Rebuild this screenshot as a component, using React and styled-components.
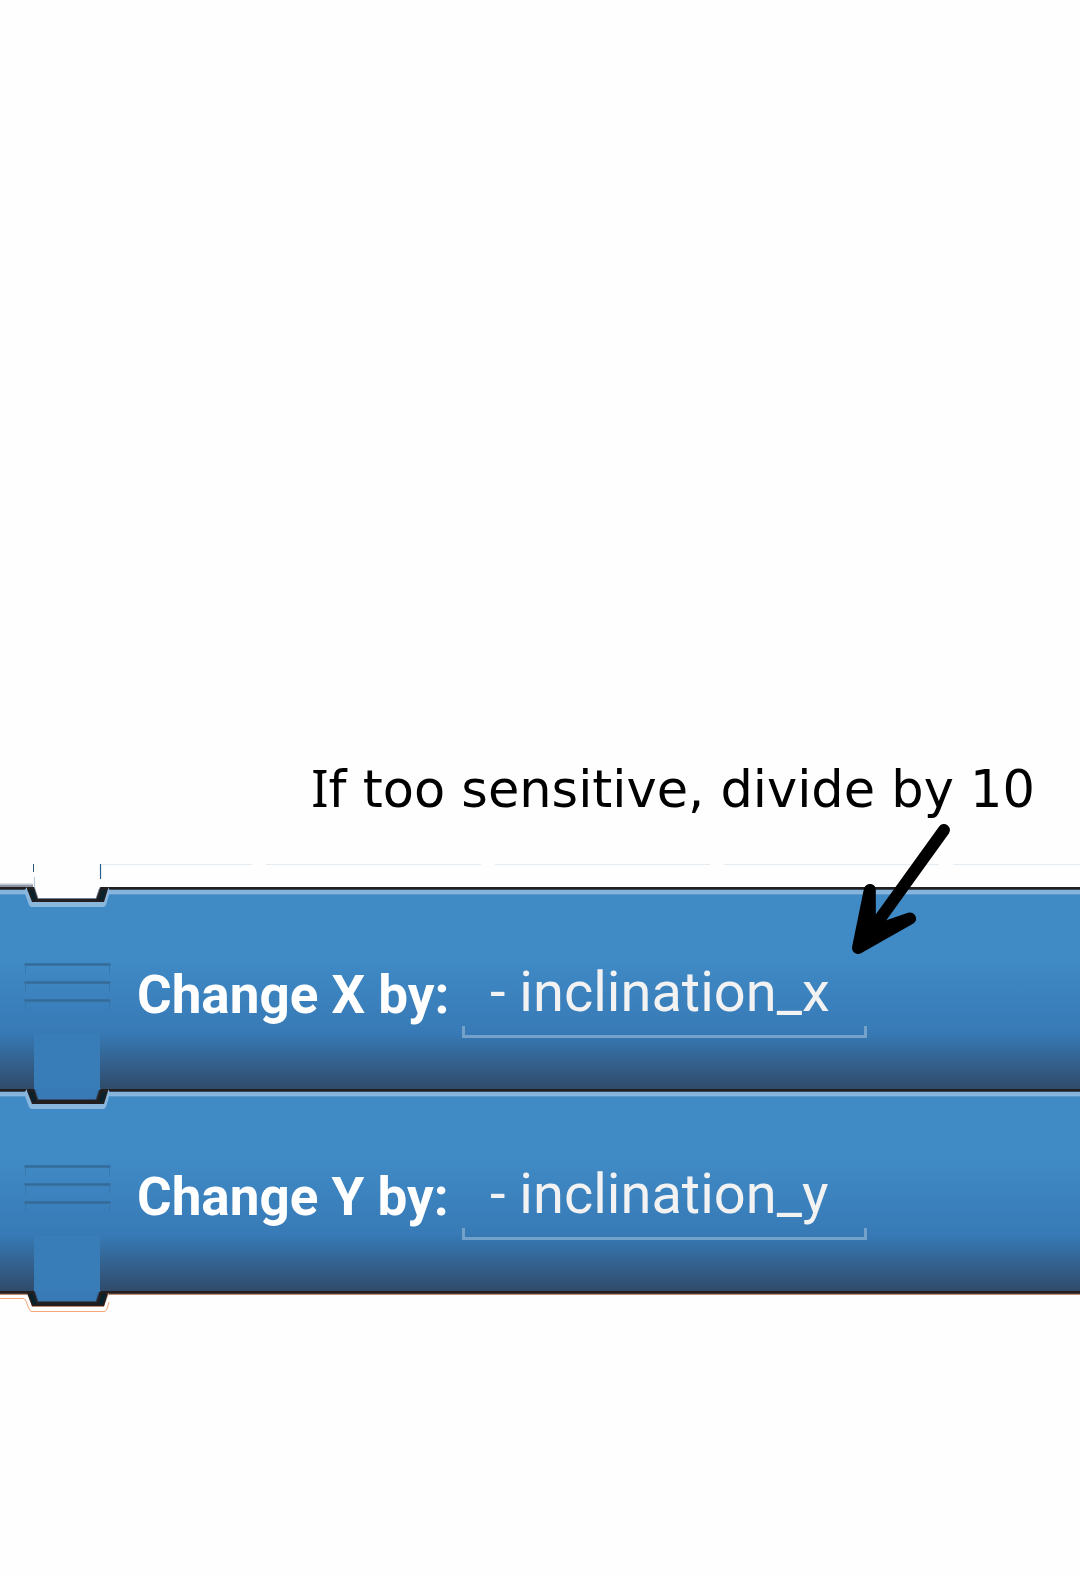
import React from "react";
import styled, { createGlobalStyle } from "styled-components";

const GlobalStyle = createGlobalStyle`
  *, *::before, *::after { box-sizing: border-box; }
  body { margin: 0; background: #fefefe; }
`;

const Page = styled.main`
  min-height: 100vh;
  padding-top: 755px;
  overflow: hidden;
  background: #fefefe;
`;

const Note = styled.p`
  position: relative;
  margin: 0;
  padding-right: 45px;
  text-align: right;
  white-space: nowrap;
  color: #000;
  font: 51px/70px "DejaVu Sans", Verdana, sans-serif;
`;

const SerifCapital = styled.span`
  font-family: "Noto Sans", sans-serif;
  line-height: 0;
`;

const Arrow = styled.svg`
  position: absolute;
  z-index: 3;
  top: 65px;
  right: 120px;
  width: 120px;
  height: 140px;
`;

const Guide = styled.div`
  height: 1px;
  margin: 39px 0 22px 101px;
  background: linear-gradient(90deg, #e4ebf1 215px, transparent 215px) -64px 0 / 229px 1px repeat-x;
`;

const Stack = styled.form`
  display: flex;
  flex-direction: column;
`;

const Block = styled.div`
  position: relative;
  display: flex;
  align-items: flex-start;
  padding: 74px 24px 51px;
  background:
    linear-gradient(#231f20 2px, #37495d 2px 3px, #85b3db 3px 6px, #8ab7dd 6px 7px, #5898cd 7px 8px, transparent 8px),
    linear-gradient(#408bc6 0 33%, #377ab6 72%, #304b6a 100%);
`;

const Grip = styled.svg`
  flex: none;
  width: 87px;
  height: 48px;
`;

const Label = styled.label`
  flex: none;
  width: 351px;
  padding-left: 26px;
  color: #fff;
  font: bold 53px/68px Roboto, sans-serif;
  white-space: nowrap;
`;

const Field = styled.input`
  flex: 0 1 405px;
  min-width: 0;
  height: 77px;
  margin: 0;
  padding: 0 0 15px 28px;
  border: 0;
  border-radius: 0;
  outline: 0;
  color: #f2f2f3;
  font: 56px/62px Roboto, sans-serif;
  background:
    linear-gradient(#73a1ca, #73a1ca) 0 100% / 100% 3px no-repeat,
    linear-gradient(#73a1ca, #73a1ca) 0 100% / 3px 12px no-repeat,
    linear-gradient(#73a1ca, #73a1ca) 100% 100% / 3px 12px no-repeat;
`;

const Joint = styled.svg`
  position: absolute;
  z-index: 1;
  top: -60px;
  left: 0;
  width: 120px;
  height: 90px;
`;

const BottomEdge = styled.div`
  position: relative;
  height: 4px;
  background: linear-gradient(#231f20 2px, #4a3734 2px 3px, #bd8e7c 3px 4px);
`;

function Connector({ kind }) {
  const first = kind === "first";
  const last = kind === "last";
  return (
    <Joint viewBox="0 -60 120 90" aria-hidden="true">
      {first && (
        <>
          <path d="M0 -3.5H33" stroke="#dfe0e3" strokeWidth="1" />
          <path d="M0 -2.5H33" stroke="#c2c7cf" strokeWidth="1" />
          <path d="M0 -1H33" stroke="#8c94a3" strokeWidth="2" />
        </>
      )}
      {last ? (
        <path
          d="M0 7.5H24L26 10L29 18L31 20.5H105L107 18L109 11"
          fill="none"
          stroke="#f8a477"
          strokeWidth="1"
        />
      ) : (
        <path d="M24 4L29 18L31 20H104L106 18L110 4L108 0H27Z" fill="#8ab7dd" />
      )}
      {last && <path d="M27 2L32 16H104L109 2Z" fill="#bd8e7c" />}
      <path d="M27 0V2L32 15H104L108 2V0Z" fill="#231f20" />
      <path d="M29 3L33 13H36L33 3ZM106 3L103 13H99L102 3Z" fill="#05222d" />
      <path
        d="M34 -1L35 2L38 11H96L99 2L101 -1Z"
        fill={first ? "#fefefe" : "#377ab6"}
      />
      {first ? (
        <>
          <path d="M33.5 -23V-15" stroke="#315579" />
          <path d="M34.5 -10V0L38 11.5H96L100 0" fill="none" stroke="#8daecb" strokeWidth="0.7" />
          <path d="M100.5 -23V-8" stroke="#285e91" strokeWidth="1.2" />
        </>
      ) : (
        <>
          <path d="M34 -55H100V0H34Z" fill="#387cb8" />
          <path d="M35 1L38 10.5H96L99 1" fill="none" stroke="#304b6a" strokeWidth="1" />
        </>
      )}
    </Joint>
  );
}

function GripLines() {
  return (
    <Grip viewBox="0 0 87 48" aria-hidden="true">
      {[3.5, 21.5, 39.5].map((y) => (
        <g key={y} fill="none">
          <path d={`M0.5 ${y}H86.5`} stroke="#346b98" strokeWidth="2.4" />
          <path d={`M1.5 ${y + 1}V${y + 9}M85.5 ${y + 1}V${y + 9}`} stroke="#3877ac" strokeWidth="1" />
        </g>
      ))}
    </Grip>
  );
}

function ChangeBlock({ axis, first }) {
  const id = `change-${axis}`;
  return (
    <Block>
      <Connector kind={first ? "first" : "middle"} />
      <GripLines />
      <Label htmlFor={id}>Change {axis.toUpperCase()} by:</Label>
      <Field id={id} type="text" defaultValue={`- inclination_${axis}`} />
    </Block>
  );
}

export default function App() {
  return (
    <Page>
      <GlobalStyle />
      <Note>
        <SerifCapital>I</SerifCapital>f too sensitive, divide by 10
        <Arrow viewBox="840 820 120 140" aria-hidden="true">
          <g stroke="#000" strokeWidth="12" strokeLinecap="round" strokeLinejoin="round">
            <path d="M944 830L864 941" />
            <path d="M869.8 890V920L881 928.5L910 918.5L858 948Z" />
          </g>
        </Arrow>
      </Note>
      <Guide />
      <Stack>
        <ChangeBlock axis="x" first />
        <ChangeBlock axis="y" />
        <BottomEdge>
          <Connector kind="last" />
        </BottomEdge>
      </Stack>
    </Page>
  );
}
